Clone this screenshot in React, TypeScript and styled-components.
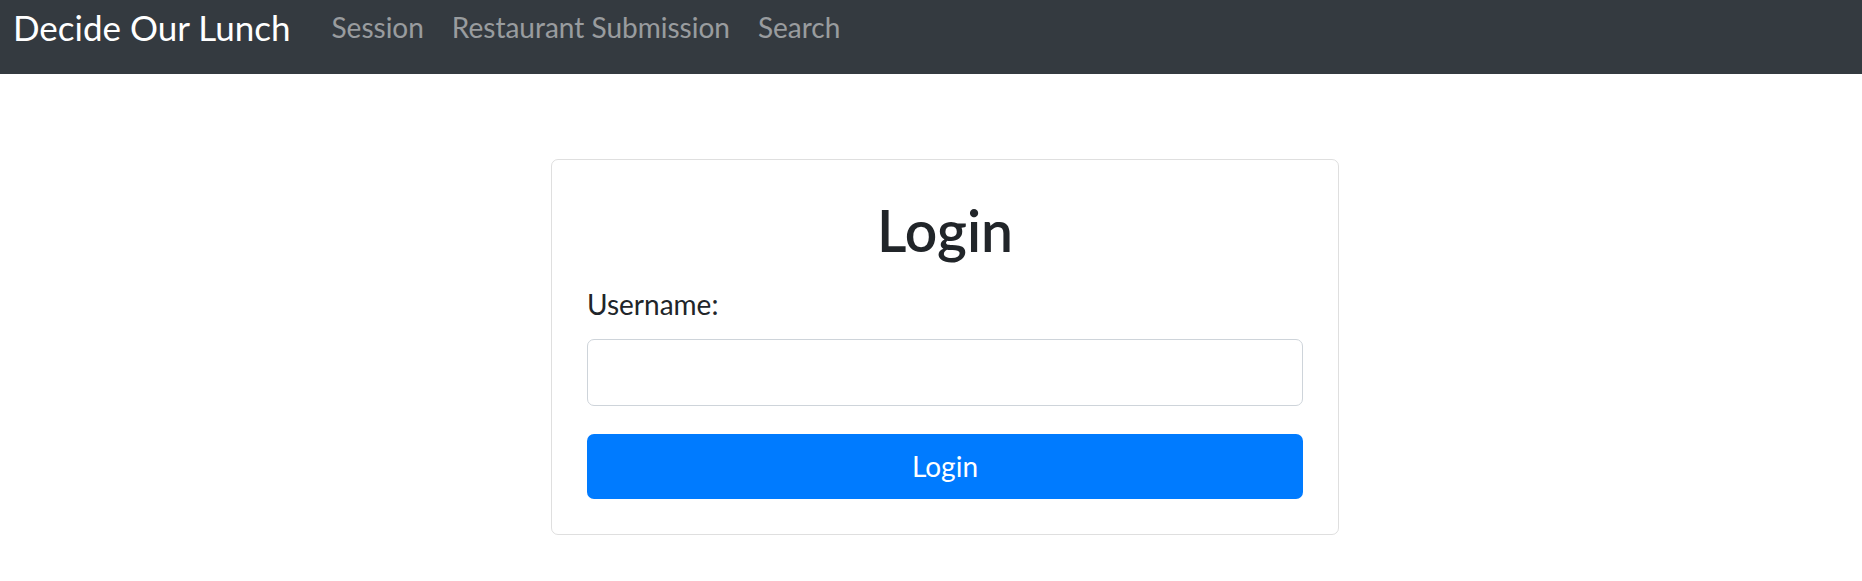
import React from "react";
import styled, { createGlobalStyle } from "styled-components";

const GlobalStyle = createGlobalStyle`
  html, body {
    margin: 0;
    padding: 0;
    background: #ffffff;
  }
  body {
    font-family: "Segoe UI", Lato, "Open Sans", "Liberation Sans", sans-serif;
    color: #212529;
  }
  * { box-sizing: border-box; }
`;

const Navbar = styled.nav`
  height: 74px;
  background: #343a40;
  display: flex;
  align-items: flex-start;
  padding: 0 13px;
`;

const Brand = styled.a`
  font-size: 35px;
  line-height: 54px;
  color: #ffffff;
  text-decoration: none;
  margin-right: 27px;
  white-space: nowrap;
`;

const NavList = styled.div`
  display: flex;
  align-items: flex-start;
`;

const NavLink = styled.a`
  font-size: 28px;
  line-height: 54px;
  color: rgba(255, 255, 255, 0.5);
  text-decoration: none;
  padding: 0 14px;
  white-space: nowrap;
`;

const Main = styled.main`
  display: flex;
  justify-content: center;
  padding: 85px 0 0 28px;
`;

const Card = styled.div`
  width: 788px;
  border: 1px solid rgba(0, 0, 0, 0.125);
  border-radius: 7px;
  padding: 35px;
  display: flex;
  flex-direction: column;
`;

const Title = styled.h2`
  margin: 0 0 17px;
  font-size: 57px;
  line-height: 71px;
  font-weight: 600;
  text-align: center;
  color: #212529;
`;

const Label = styled.label`
  font-size: 28px;
  line-height: 42px;
  margin-bottom: 14px;
  color: #212529;
`;

const Input = styled.input`
  height: 66.5px;
  width: 100%;
  border: 1.75px solid #ced4da;
  border-radius: 7px;
  padding: 10px 21px;
  font-size: 28px;
  font-family: inherit;
  margin-bottom: 28px;
  outline: none;
`;

const Button = styled.button`
  height: 65.5px;
  width: 100%;
  border: none;
  border-radius: 7px;
  background: #007bff;
  color: #ffffff;
  font-size: 28px;
  font-family: inherit;
  cursor: pointer;
`;

export default function App() {
  return (
    <>
      <GlobalStyle />
      <Navbar>
        <Brand href="#">Decide Our Lunch</Brand>
        <NavList>
          <NavLink href="#">Session</NavLink>
          <NavLink href="#">Restaurant Submission</NavLink>
          <NavLink href="#">Search</NavLink>
        </NavList>
      </Navbar>
      <Main>
        <Card>
          <Title>Login</Title>
          <Label htmlFor="username">Username:</Label>
          <Input id="username" type="text" />
          <Button type="button">Login</Button>
        </Card>
      </Main>
    </>
  );
}
